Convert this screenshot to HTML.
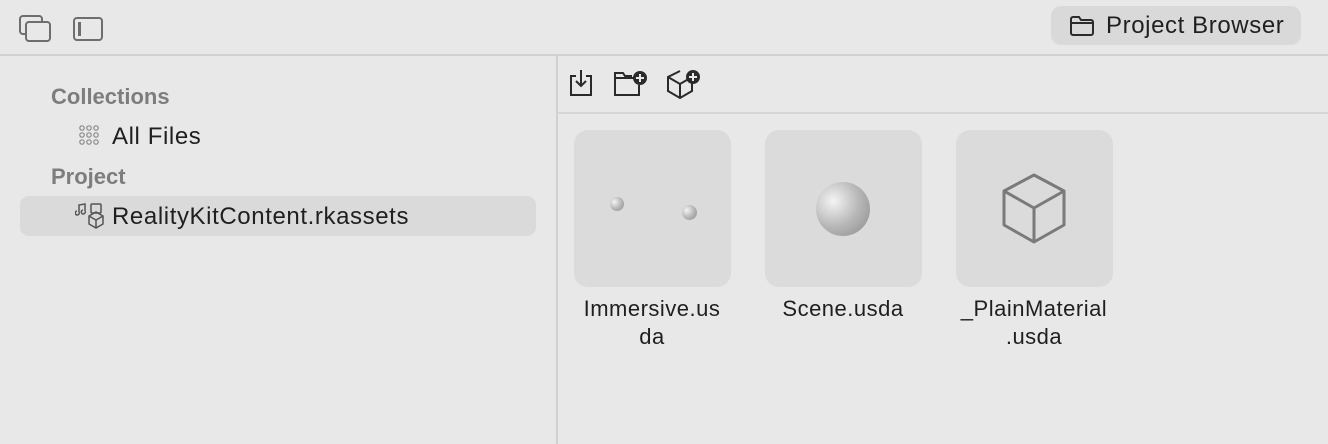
<!DOCTYPE html>
<html><head><style>
*{margin:0;padding:0;box-sizing:border-box}
body{width:1328px;height:444px;background:#e8e8e8;font-family:"Liberation Sans",sans-serif;position:relative;overflow:hidden;color:#1f1f1f}
.abs{position:absolute}
.hdr{left:0;top:54px;width:1328px;height:2px;background:#d0d0d0}
.vd{left:556px;top:56px;width:2px;height:388px;background:#d0d0d0}
.tl{left:558px;top:112px;width:770px;height:2px;background:#d6d6d6}
.btn{left:1051px;top:6px;width:250px;height:39px;border-radius:10px;background:#d9d9d9;font-size:24px;letter-spacing:0.6px;line-height:39px;padding-left:55px}
.sec{font-size:22px;font-weight:bold;color:#7d7d7d}
.item{font-size:24px;letter-spacing:0.6px}
.sel{left:20px;top:196px;width:516px;height:40px;border-radius:9px;background:#dadada}
.card{width:157px;height:157px;border-radius:14px;background:#dadbda;top:130px}
.lbl{font-size:22px;letter-spacing:0.5px;text-align:center;width:170px;line-height:28px;top:295px}
.ball{border-radius:50%;background:radial-gradient(circle at 32% 35%,#f4f4f4,#b8b8b8 50%,#8a8a8a 100%)}
</style></head><body>
<svg class="abs" style="left:18px;top:13px" width="34" height="30" viewBox="0 0 34 30" fill="none" stroke="#6e6e6e" stroke-width="2"><rect x="2" y="3" width="22" height="18" rx="3"/><rect x="8" y="9" width="24" height="19" rx="3" fill="#e8e8e8"/></svg>
<svg class="abs" style="left:72px;top:16px" width="32" height="26" viewBox="0 0 32 26" fill="none" stroke="#6e6e6e" stroke-width="2"><rect x="2" y="2" width="28" height="22" rx="3"/><rect x="6" y="6" width="3" height="14" fill="#6e6e6e" stroke="none"/></svg>
<div class="abs btn">Project Browser</div>
<svg class="abs" style="left:1069px;top:15px" width="26" height="22" viewBox="0 0 26 22" fill="none" stroke="#2a2a2a" stroke-width="2"><path d="M2 4a2 2 0 0 1 2-2h6l2 3h10a2 2 0 0 1 2 2v11a2 2 0 0 1-2 2H4a2 2 0 0 1-2-2z M2 8h22"/></svg>
<div class="abs hdr"></div><div class="abs vd"></div><div class="abs tl"></div>
<div class="abs sec" style="left:51px;top:84px">Collections</div>
<svg class="abs" style="left:79px;top:125px" width="22" height="22" viewBox="0 0 22 22" fill="none" stroke="#8a8a8a" stroke-width="1.2"><circle cx="3" cy="3" r="2.2"/><circle cx="10" cy="3" r="2.2"/><circle cx="17" cy="3" r="2.2"/><circle cx="3" cy="10" r="2.2"/><circle cx="10" cy="10" r="2.2"/><circle cx="17" cy="10" r="2.2"/><circle cx="3" cy="17" r="2.2"/><circle cx="10" cy="17" r="2.2"/><circle cx="17" cy="17" r="2.2"/></svg>
<div class="abs item" style="left:112px;top:123px">All Files</div>
<div class="abs sec" style="left:51px;top:164px">Project</div>
<div class="abs sel"></div>
<svg class="abs" style="left:75px;top:202px" width="30" height="28" viewBox="0 0 30 28" fill="none" stroke="#555" stroke-width="1.5"><path d="M4 10V3l6-1v7M4 10a2 2 0 1 1-2-1M10 9a2 2 0 1 1-2-1"/><rect x="16" y="2" width="10" height="9" rx="1"/><path d="M14 14l7-4 7 4v8l-7 4-7-4z M14 14l7 4 7-4 M21 18v8"/></svg>
<div class="abs item" style="left:112px;top:203px">RealityKitContent.rkassets</div>
<svg class="abs" style="left:567px;top:68px" width="28" height="30" viewBox="0 0 28 30" fill="none" stroke="#2a2a2a" stroke-width="2"><path d="M9 8H4v19h20V8h-5 M14 2v16 M9 13l5 5 5-5"/></svg>
<svg class="abs" style="left:612px;top:69px" width="38" height="30" viewBox="0 0 38 30" fill="none" stroke="#2a2a2a" stroke-width="2"><path d="M22 9H3v17h24V16 M3 9V4h8l2 3h7"/><circle cx="28" cy="9" r="7" fill="#2a2a2a" stroke="none"/><path d="M28 5v8M24 9h8" stroke="#e8e8e8"/></svg>
<svg class="abs" style="left:665px;top:68px" width="38" height="32" viewBox="0 0 38 32" fill="none" stroke="#2a2a2a" stroke-width="2"><path d="M15 3L3 9v14l12 7 12-7V15 M3 9l12 7 12-7 M15 16v14" stroke-dasharray="0"/><circle cx="28" cy="9" r="7" fill="#2a2a2a" stroke="none"/><path d="M28 5v8M24 9h8" stroke="#e8e8e8"/></svg>
<div class="abs card" style="left:574px"></div>
<div class="abs card" style="left:765px"></div>
<div class="abs card" style="left:956px"></div>
<div class="abs ball" style="left:610px;top:197px;width:14px;height:14px"></div>
<div class="abs ball" style="left:682px;top:205px;width:15px;height:15px"></div>
<div class="abs ball" style="left:816px;top:182px;width:54px;height:54px"></div>
<svg class="abs" style="left:1000px;top:172px" width="68" height="72" viewBox="0 0 68 72" fill="none" stroke="#7a7a7a" stroke-width="3" stroke-linejoin="round"><path d="M34 3L4 19v34l30 17 30-17V19z M4 19l30 17 30-17 M34 36v34"/></svg>
<div class="abs lbl" style="left:567px">Immersive.us<br>da</div>
<div class="abs lbl" style="left:758px">Scene.usda</div>
<div class="abs lbl" style="left:949px">_PlainMaterial<br>.usda</div>
</body></html>
